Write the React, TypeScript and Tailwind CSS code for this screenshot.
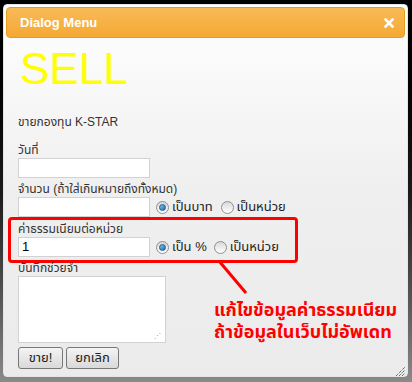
import React from "react";

const font = { fontFamily: '"Liberation Sans", "Noto Sans Thai", "Noto Sans", sans-serif' };

function Radio({ checked, label }: { checked?: boolean; label: string }) {
  return (
    <label className="flex items-center gap-[3px] text-[13px] text-[#222]">
      <span className="flex h-[13px] w-[13px] items-center justify-center rounded-full border border-[#8f8f8f] bg-linear-to-b from-[#d9d9d9] to-white">
        {checked && <span className="h-[7px] w-[7px] rounded-full border border-[#1d5d8c] bg-linear-to-br from-[#7ec4f2] to-[#1a6fb0]" />}
      </span>
      {label}
    </label>
  );
}

function TextInput({ value }: { value?: string }) {
  return (
    <div className="flex h-[20px] w-[132px] shrink-0 items-center border border-[#d2d2d2] bg-white px-[3px] text-[13px] text-black">
      {value}
    </div>
  );
}

export default function App() {
  return (
    <div className="relative h-[382px] w-[412px] overflow-hidden bg-linear-to-b from-black via-[#1a1a1a] to-[#8a8a8a] pl-[3px] pt-[4px]" style={font}>
      <div className="flex h-[373px] w-[405px] flex-col rounded-[4px] border border-[#e5e5e5] bg-linear-to-b from-white via-[#efefef] to-[#ebebeb] p-[2px]">
        <div className="flex h-[31px] items-center justify-between rounded-[4px] border border-[#e99a22] bg-linear-to-b from-[#f8ba55] to-[#f5a933] pl-[13px] pr-[10px]">
          <span className="text-[13px] font-bold text-white">Dialog Menu</span>
          <svg width="10" height="10" viewBox="0 0 10 10">
            <path d="M1.5 1.5 L8.5 8.5 M8.5 1.5 L1.5 8.5" stroke="white" strokeWidth="2.6" strokeLinecap="square" />
          </svg>
        </div>

        <div className="flex flex-col px-[12px]">
          <div className="mt-[8px] h-[46px] pl-[2px] text-[44px] leading-[46px] text-[#ffff00]">SELL</div>
          <div className="mt-[22px] text-[12px] leading-[16px] text-[#333]">ขายกองทุน K-STAR</div>

          <div className="mt-[12px] text-[12px] leading-[16px] text-[#333]">วันที่</div>
          <TextInput />

          <div className="mt-[3px] text-[12px] leading-[16px] text-[#333]">จำนวน (ถ้าใส่เกินหมายถึงทั้งหมด)</div>
          <div className="flex items-center gap-[6px]">
            <TextInput />
            <div className="flex items-center gap-[8px]">
              <Radio checked label="เป็นบาท" />
              <Radio label="เป็นหน่วย" />
            </div>
          </div>

          <div className="-mx-[10px] w-[290px] rounded-[4px] border-[3px] border-[#ff0000] px-[7px] pb-[3px] pt-[1px]">
            <div className="text-[12px] leading-[16px] text-[#333]">ค่าธรรมเนียมต่อหน่วย</div>
            <div className="flex items-center gap-[6px]">
              <TextInput value="1" />
              <div className="flex items-center gap-[7px]">
                <Radio checked label="เป็น %" />
                <Radio label="เป็นหน่วย" />
              </div>
            </div>
          </div>

          <div className="mt-[-3px] text-[12px] leading-[16px] text-[#333]">บันทึกช่วยจำ</div>
          <div className="relative h-[67px] w-[148px] border border-[#d2d2d2] bg-white">
            <span className="absolute bottom-[3px] right-[4px] text-[7px] leading-none text-[#999]">⋰</span>
          </div>

          <div className="mt-[4px] flex gap-[3px]">
            <button className="h-[22px] w-[45px] rounded-[3px] border border-[#777] bg-linear-to-b from-[#f4f4f4] to-[#d9d9d9] text-[13px] text-[#222]">ขาย!</button>
            <button className="h-[22px] w-[53px] rounded-[3px] border border-[#777] bg-linear-to-b from-[#f4f4f4] to-[#d9d9d9] text-[13px] text-[#222]">ยกเลิก</button>
          </div>
        </div>
      </div>

      <svg className="absolute left-0 top-0" width="412" height="382">
        <line x1="219" y1="261" x2="246" y2="293" stroke="#ff0000" strokeWidth="3" />
        <line x1="396" y1="376" x2="405" y2="367" stroke="#333" strokeWidth="1" strokeDasharray="1 1" />
        <line x1="399" y1="376" x2="405" y2="370" stroke="#333" strokeWidth="1" strokeDasharray="1 1" />
        <line x1="402" y1="376" x2="405" y2="373" stroke="#333" strokeWidth="1" strokeDasharray="1 1" />
      </svg>

      <div className="absolute left-[214px] top-[299px] text-[18px] font-bold leading-[22px] text-[#ff0000]">
        <div>แก้ไขข้อมูลค่าธรรมเนียม</div>
        <div>ถ้าข้อมูลในเว็บไม่อัพเดท</div>
      </div>
    </div>
  );
}
